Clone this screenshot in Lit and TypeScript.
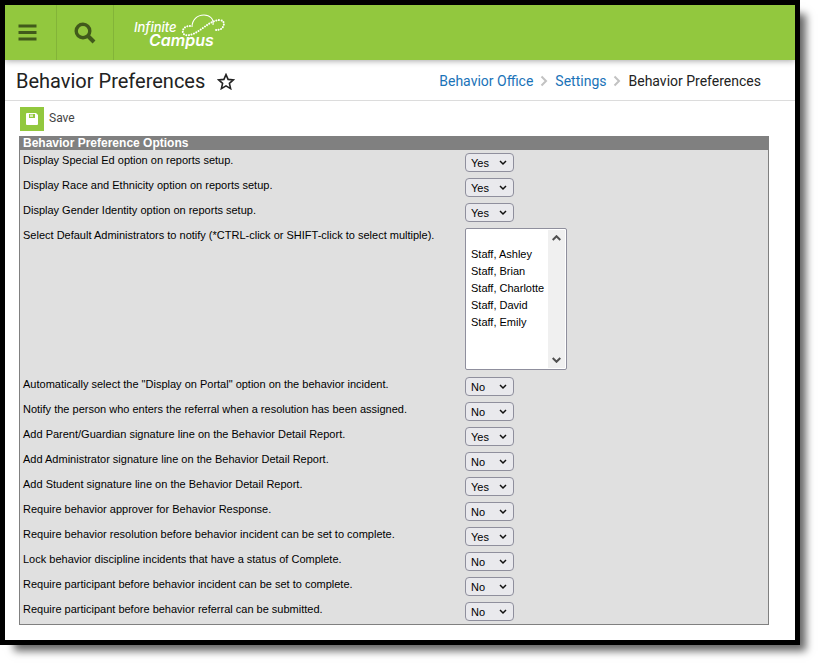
import { LitElement, html, svg, css } from "lit";
import { customElement, state } from "lit/decorators.js";

interface Preference {
  id: string;
  label: string;
  value?: "Yes" | "No";
}

const PREFERENCES: Preference[] = [
  { id: "special-ed", label: "Display Special Ed option on reports setup.", value: "Yes" },
  { id: "race", label: "Display Race and Ethnicity option on reports setup.", value: "Yes" },
  { id: "gender", label: "Display Gender Identity option on reports setup.", value: "Yes" },
  { id: "admins", label: "Select Default Administrators to notify (*CTRL-click or SHIFT-click to select multiple)." },
  { id: "portal", label: 'Automatically select the "Display on Portal" option on the behavior incident.', value: "No" },
  { id: "notify", label: "Notify the person who enters the referral when a resolution has been assigned.", value: "No" },
  { id: "sig-parent", label: "Add Parent/Guardian signature line on the Behavior Detail Report.", value: "Yes" },
  { id: "sig-admin", label: "Add Administrator signature line on the Behavior Detail Report.", value: "No" },
  { id: "sig-student", label: "Add Student signature line on the Behavior Detail Report.", value: "Yes" },
  { id: "approver", label: "Require behavior approver for Behavior Response.", value: "No" },
  { id: "resolution", label: "Require behavior resolution before behavior incident can be set to complete.", value: "Yes" },
  { id: "lock", label: "Lock behavior discipline incidents that have a status of Complete.", value: "No" },
  { id: "participant-incident", label: "Require participant before behavior incident can be set to complete.", value: "No" },
  { id: "participant-referral", label: "Require participant before behavior referral can be submitted.", value: "No" },
];

const STAFF = ["", "Staff, Ashley", "Staff, Brian", "Staff, Charlotte", "Staff, David", "Staff, Emily"];

const crumbArrow = svg`<svg class="crumb-arrow" width="8" height="12" viewBox="0 0 8 12" aria-hidden="true">
  <path d="M1.5 1.5 L6 6 L1.5 10.5" fill="none" stroke="#c2c2c2" stroke-width="2"/></svg>`;

@customElement("app-root")
export class AppRoot extends LitElement {
  @state() private preferences = PREFERENCES;

  static styles = css`
    * { box-sizing: border-box; }
    :host {
      display: block;
      padding: 0 25px 25px 0;
      font-family: "Liberation Sans", Arial, sans-serif;
      font-size: 11px;
      line-height: 14px;
      color: #000;
      background: #fff;
    }
    .window {
      border: 5px solid #000;
      background: #fff;
      padding-bottom: 15px;
      box-shadow: 10px 10px 8px -4px rgba(0, 0, 0, 0.6);
    }
    button { border: 0; background: none; padding: 0; margin: 0; font: inherit; color: inherit; cursor: pointer; }
    svg { display: block; }
    .topbar {
      display: flex;
      height: 55px;
      background: #92c83e;
      position: relative;
      box-shadow: 0 1px 6px rgba(0, 0, 0, 0.35);
    }
    .tool {
      display: flex;
      align-items: center;
      justify-content: center;
      border-right: 1px solid #83b438;
    }
    .menu { width: 52px; padding-right: 6px; }
    .search { width: 57px; }
    .logo { margin: 7px 0 0 19px; }
    .brand { fill: #fff; font-family: Inter, "Open Sans", sans-serif; font-style: italic; }
    .brand-top { font-size: 13px; font-weight: 500; }
    .brand-bottom { font-size: 16px; font-weight: 600; }
    .titlebar {
      display: flex;
      align-items: center;
      height: 41px;
      padding: 2px 34px 0 11px;
      border-bottom: 1px solid #dcdcdc;
      font-family: Roboto, sans-serif;
      color: #222;
    }
    h1 { margin: 0; font-size: 20px; line-height: 26px; font-weight: 400; }
    .star { margin-left: 12px; }
    .crumbs {
      display: flex;
      align-items: center;
      gap: 7px;
      margin-left: auto;
      font-size: 14px;
      line-height: 20px;
    }
    a { color: #1a73b8; text-decoration: none; }
    .actions { padding: 6px 15px 5px; }
    .save {
      display: flex;
      align-items: flex-start;
      gap: 5px;
      font-family: Roboto, sans-serif;
      font-size: 12px;
      line-height: 22px;
      color: #444;
    }
    .panel { margin: 0 26px 0 14px; border: 1px solid #808080; border-top: 0; background: #e0e0e0; }
    h2 {
      margin: 0;
      padding: 1px 3px 0;
      font-size: 12px;
      line-height: 13px;
      color: #fff;
      background: #808080;
    }
    .row { display: grid; grid-template-columns: 442px 1fr; padding: 3px; }
    .label { justify-self: start; align-self: start; }
    .choice { position: relative; width: 49px; height: 19px; }
    .choice select {
      appearance: none;
      display: block;
      width: 100%;
      height: 100%;
      margin: 0;
      padding: 0 5px;
      border: 1px solid #8f8f9d;
      border-radius: 4px;
      background: #e9e9ed;
      color: #000;
      font: inherit;
    }
    .choice svg { position: absolute; right: 7px; top: 7px; pointer-events: none; }
    .list {
      display: flex;
      width: 102px;
      height: 142px;
      margin-bottom: 1px;
      padding: 1px;
      border: 1px solid #8f8f9d;
      border-radius: 2px;
      background: #fff;
    }
    .list select {
      appearance: none;
      flex: 1;
      min-width: 0;
      margin: 0;
      padding: 1px 0 0;
      border: 0;
      outline: 0;
      overflow: hidden;
      background: #fff;
      font: inherit;
      color: #000;
    }
    .list option { height: 17px; min-height: 17px; padding: 0 4px; line-height: 17px; }
    .scroll {
      display: flex;
      flex-direction: column;
      justify-content: space-between;
      align-items: center;
      width: 17px;
      padding: 5px 0;
      background: #f0f0f0;
    }
  `;

  private renderLogo() {
    return html`<svg class="logo" width="94" height="44" viewBox="0 0 94 44" role="img" aria-label="Infinite Campus">
      <text class="brand brand-top" x="1" y="20">Infinite</text>
      <text class="brand brand-bottom" x="16" y="34">Campus</text>
      <path d="M59 15 C59 8 64 3 71 3 C77 3 81 7 80 13" fill="none" stroke="#fff" stroke-width="1.1"/>
      <path d="M57 14 C52 14 49 17 50 21 C52 25 59 23 64 20 C72 15 79 8 87 8 C93 9 91 15 88 17 C86 18 84 18 81 18"
        fill="none" stroke="#fff" stroke-width="2" stroke-linecap="round" stroke-dasharray="0.1 2.5"/>
    </svg>`;
  }

  private renderChoice(p: Preference) {
    return html`<div class="choice">
      <select id=${p.id}>
        <option ?selected=${p.value === "Yes"}>Yes</option>
        <option ?selected=${p.value === "No"}>No</option>
      </select>
      <svg width="8" height="6" viewBox="0 0 8 6" aria-hidden="true">
        <path d="M1 1 L4 4 L7 1" fill="none" stroke="#111" stroke-width="1.5"/>
      </svg>
    </div>`;
  }

  private renderStaff(p: Preference) {
    return html`<div class="list">
      <select id=${p.id} multiple size="8">
        ${STAFF.map((name) => html`<option>${name}</option>`)}
      </select>
      <div class="scroll" aria-hidden="true">
        <svg width="9" height="6" viewBox="0 0 9 6"><path d="M0.7 5 L4.5 1.2 L8.3 5" fill="none" stroke="#505050" stroke-width="2"/></svg>
        <svg width="9" height="6" viewBox="0 0 9 6"><path d="M0.7 1 L4.5 4.8 L8.3 1" fill="none" stroke="#505050" stroke-width="2"/></svg>
      </div>
    </div>`;
  }

  render() {
    return html`<div class="window">
      <header class="topbar">
        <button class="tool menu" aria-label="Menu">
          <svg width="19" height="17" viewBox="0 0 19 17">
            <path d="M0.5 2 H18.5 M0.5 8.5 H18.5 M0.5 15 H18.5" stroke="#415a1b" stroke-width="3"/>
          </svg>
        </button>
        <button class="tool search" aria-label="Search">
          <svg width="22" height="22" viewBox="0 0 22 22">
            <circle cx="9" cy="9" r="6.8" fill="none" stroke="#415a1b" stroke-width="3.4"/>
            <path d="M14 14 L20 20" stroke="#415a1b" stroke-width="4"/>
          </svg>
        </button>
        ${this.renderLogo()}
      </header>
      <div class="titlebar">
        <h1>Behavior Preferences</h1>
        <button class="star" aria-label="Add to favorites">
          <svg width="18" height="17" viewBox="0 0 18 17">
            <path d="M9 1.6 L11.1 6.4 L16.4 6.9 L12.4 10.4 L13.6 15.6 L9 12.9 L4.4 15.6 L5.6 10.4 L1.6 6.9 L6.9 6.4 Z"
              fill="none" stroke="#222" stroke-width="1.6" stroke-linejoin="miter"/>
          </svg>
        </button>
        <nav class="crumbs" aria-label="Breadcrumb">
          <a href="#office">Behavior Office</a>${crumbArrow}<a href="#settings">Settings</a>${crumbArrow}<span>Behavior Preferences</span>
        </nav>
      </div>
      <div class="actions">
        <button class="save">
          <svg width="24" height="24" viewBox="0 0 24 24" aria-hidden="true">
            <rect width="24" height="24" fill="#92c83e"/>
            <path d="M6 7 Q6 6 7 6 H16 L18 8 V17 Q18 18 17 18 H7 Q6 18 6 17 Z" fill="#fff"/>
            <path d="M9 7 H15 V11 H9 Z" fill="#92c83e"/>
            <path d="M10 7.5 H13 V10 H10 Z" fill="#d9ecb8"/>
          </svg>
          <span>Save</span>
        </button>
      </div>
      <section class="panel">
        <h2>Behavior Preference Options</h2>
        ${this.preferences.map(
          (p) => html`<div class="row">
            <label class="label" for=${p.id}>${p.label}</label>
            ${p.value ? this.renderChoice(p) : this.renderStaff(p)}
          </div>`
        )}
      </section>
    </div>`;
  }
}
